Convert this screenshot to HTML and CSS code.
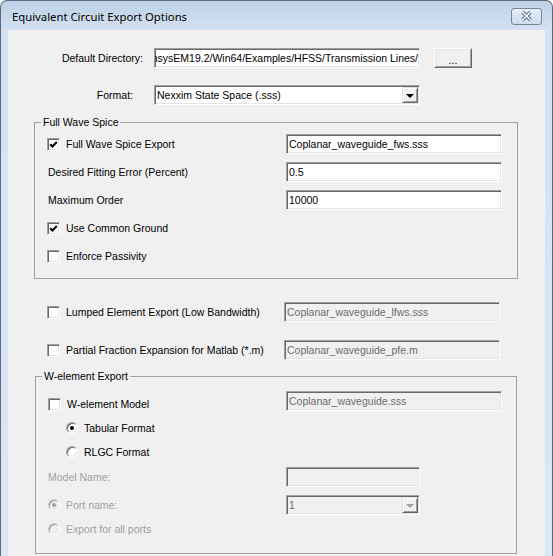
FILE: index.html
```html
<!DOCTYPE html>
<html lang="en">
<head>
    <meta charset="UTF-8">
    <title>Equivalent Circuit Export Options</title>
    <link rel="stylesheet" href="styles.css">
</head>
<body>
    <div class="window">
        <div class="titlebar">
            <span class="title">Equivalent Circuit Export Options</span>
            <span class="close-btn">
                <svg width="29" height="15" viewBox="0 0 29 15">
                    <path d="M10.5 3 L18.5 11 M18.5 3 L10.5 11" stroke="#56677b" stroke-width="3.6" fill="none"/>
                    <path d="M10.5 3 L18.5 11 M18.5 3 L10.5 11" stroke="#fbfdff" stroke-width="1.6" fill="none"/>
                </svg>
            </span>
        </div>

        <div class="client">
            <div class="top-grid">
                <span class="label dir-label">Default Directory:</span>
                <div class="field dir-field"><span>nsysEM19.2/Win64/Examples/HFSS/Transmission Lines/</span></div>
                <span class="button">...</span>

                <span class="label format-label">Format:</span>
                <div class="field combo">
                    <span>Nexxim State Space (.sss)</span>
                    <span class="combo-btn"><i class="arrow"></i></span>
                </div>
            </div>

            <!-- Full wave spice options -->
            <fieldset class="group fws">
                <legend>Full Wave Spice</legend>
                <div class="row">
                    <span class="check on"><svg width="9" height="9" viewBox="0 0 9 9"><polyline points="1.2,4.2 3.4,6.4 7.8,2" stroke="#000" stroke-width="2.1" fill="none"/></svg></span>
                    <span>Full Wave Spice Export</span>
                    <div class="field">Coplanar_waveguide_fws.sss</div>
                </div>
                <div class="row text-row">
                    <span>Desired Fitting Error (Percent)</span>
                    <div class="field">0.5</div>
                </div>
                <div class="row text-row">
                    <span>Maximum Order</span>
                    <div class="field">10000</div>
                </div>
                <div class="row">
                    <span class="check on"><svg width="9" height="9" viewBox="0 0 9 9"><polyline points="1.2,4.2 3.4,6.4 7.8,2" stroke="#000" stroke-width="2.1" fill="none"/></svg></span>
                    <span>Use Common Ground</span>
                </div>
                <div class="row">
                    <span class="check"></span>
                    <span>Enforce Passivity</span>
                </div>
            </fieldset>

            <div class="row solo-row">
                <span class="check"></span>
                <span>Lumped Element Export (Low Bandwidth)</span>
                <div class="field disabled">Coplanar_waveguide_lfws.sss</div>
            </div>
            <div class="row solo-row">
                <span class="check"></span>
                <span>Partial Fraction Expansion for Matlab (*.m)</span>
                <div class="field disabled">Coplanar_waveguide_pfe.m</div>
            </div>

            <!-- W-element options -->
            <fieldset class="group wel">
                <legend>W-element Export</legend>
                <div class="row model-check">
                    <span class="check"></span>
                    <span>W-element Model</span>
                    <div class="field disabled">Coplanar_waveguide.sss</div>
                </div>
                <div class="row indent tabular">
                    <span class="radio on"></span>
                    <span>Tabular Format</span>
                </div>
                <div class="row indent rlgc">
                    <span class="radio"></span>
                    <span>RLGC Format</span>
                </div>
                <div class="row model-row muted">
                    <span>Model Name:</span>
                    <div class="field disabled short"></div>
                </div>
                <div class="row port-row muted">
                    <span class="radio on disabled"></span>
                    <span>Port name:</span>
                    <div class="field combo disabled short">
                        <span>1</span>
                        <span class="combo-btn"><i class="arrow"></i></span>
                    </div>
                </div>
                <div class="row all-row muted">
                    <span class="radio disabled"></span>
                    <span>Export for all ports</span>
                </div>
            </fieldset>
        </div>
    </div>
</body>
</html>
```

FILE: styles.css
```css
* {
    margin: 0;
    padding: 0;
    box-sizing: border-box;
}

body {
    width: 553px;
    height: 556px;
    overflow: hidden;
    background: #fff;
    font-family: 'Liberation Sans', Arial, sans-serif;
    font-size: 10.5px;
    color: #000;
}

.window {
    height: 600px;
    display: flex;
    flex-direction: column;
    border: 1px solid #5b697a;
    border-bottom: none;
    border-radius: 7px 7px 0 0;
    background: linear-gradient(#bed1e7, #d3e1f1 29px, #dbe7f4);
}

.titlebar {
    height: 29px;
    flex: none;
    display: flex;
    align-items: center;
    justify-content: space-between;
    padding: 0 10px 0 11px;
}

.title {
    font-family: 'Noto Sans', 'Open Sans', sans-serif;
    font-size: 11.3px;
    margin-top: 2px;
}

.close-btn {
    width: 31px;
    height: 17px;
    margin-top: 2px;
    display: flex;
    align-items: center;
    justify-content: center;
    border: 1px solid #77869a;
    border-radius: 3px;
    background: linear-gradient(#e6eef8, #cddcee);
}

.client {
    flex: 1;
    margin: 0 7px;
    padding-top: 18px;
    background: #f0f0f0;
}

/* directory + format */
.top-grid {
    display: grid;
    grid-template-columns: 146px 266px 52px;
    grid-auto-rows: 20px;
    row-gap: 17px;
    align-items: center;
}

.dir-label {
    justify-self: end;
    padding-right: 11px;
}

.format-label {
    justify-self: end;
    padding-right: 21px;
}

/* sunken edit box */
.field {
    height: 20px;
    display: flex;
    align-items: center;
    padding: 0 2px;
    white-space: nowrap;
    overflow: hidden;
    background: #fff;
    border: 1px solid;
    border-color: #a0a0a0 #fff #fff #a0a0a0;
    box-shadow: inset 1px 1px #696969, inset -1px -1px #e3e3e3;
}

.field.disabled {
    background: #f0f0f0;
    color: #6d6d6d;
}

.dir-field {
    justify-content: flex-end;
    padding-right: 1px;
}

.dir-field span {
    flex: none;
}

.combo {
    padding-right: 1px;
}

.combo-btn {
    width: 16px;
    height: 16px;
    margin-left: auto;
    display: flex;
    align-items: center;
    justify-content: center;
    background: #f0f0f0;
    border: 1px solid;
    border-color: #e3e3e3 #696969 #696969 #e3e3e3;
    box-shadow: inset 1px 1px #fff, inset -1px -1px #a0a0a0;
}

.arrow {
    width: 0;
    height: 0;
    margin-top: 1px;
    border-left: 4px solid transparent;
    border-right: 4px solid transparent;
    border-top: 4px solid #000;
}

.disabled .arrow {
    border-top-color: #a0a0a0;
}

/* raised push button */
.button {
    height: 20px;
    margin-left: 14px;
    display: flex;
    align-items: center;
    justify-content: center;
    padding-top: 3px;
    background: #f0f0f0;
    border: 1px solid;
    border-color: #fff #696969 #696969 #fff;
    box-shadow: inset 1px 1px #e3e3e3, inset -1px -1px #a0a0a0;
}

/* group boxes */
.group {
    border: 1px solid #a0a0a0;
    min-width: 0;
}

.group legend {
    margin-left: 6px;
    padding: 0 2px;
    line-height: 14px;
}

.fws {
    width: 484px;
    margin: 10px 0 0 26px;
    padding: 5px 15px 12px 0;
}

.wel {
    width: 482px;
    margin: 9px 0 0 27px;
    padding: 11px 14px 14px 0;
}

.row {
    height: 20px;
    display: flex;
    align-items: center;
    white-space: nowrap;
}

.row .field {
    width: 216px;
    margin-left: auto;
}

.fws .row {
    padding-left: 12px;
}

.fws .row + .row {
    margin-top: 8px;
}

.fws .text-row {
    padding-left: 13px;
}

.solo-row {
    margin-top: 23px;
    padding: 0 45px 0 39px;
}

.solo-row + .solo-row {
    margin-top: 18px;
}

.wel .row {
    padding-left: 12px;
}

.wel .indent {
    padding-left: 30px;
}

/* the model file box sits a little above its checkbox */
.model-check .field {
    align-self: flex-start;
    margin-top: -3px;
}

.tabular { margin-top: 4px; }
.rlgc { margin-top: 4px; }
.model-row { margin-top: 5px; }
.port-row { margin-top: 8px; }
.all-row { margin-top: 4px; }

.row .field.short {
    width: 134px;
    margin-right: 82px;
}

.muted {
    color: #a0a0a0;
}

/* checkbox */
.check {
    width: 13px;
    height: 13px;
    flex: none;
    margin-right: 6px;
    display: flex;
    align-items: center;
    justify-content: center;
    background: #fff;
    border: 1px solid;
    border-color: #a0a0a0 #fff #fff #a0a0a0;
    box-shadow: inset 1px 1px #696969, inset -1px -1px #e3e3e3;
}

/* radio button */
.radio {
    width: 12px;
    height: 12px;
    flex: none;
    margin-right: 6px;
    display: flex;
    align-items: center;
    justify-content: center;
    border-radius: 50%;
    background: #fff;
    border: 1px solid;
    border-color: #a0a0a0 #fff #fff #a0a0a0;
    box-shadow: inset 1px 1px #696969, inset -1px -1px #e3e3e3;
}

.radio.on::after {
    content: '';
    width: 4px;
    height: 4px;
    border-radius: 50%;
    background: #000;
}

.radio.disabled {
    background: #f0f0f0;
    border-color: #c8c8c8 #fff #fff #c8c8c8;
    box-shadow: inset 1px 1px #a0a0a0, inset -1px -1px #e3e3e3;
}

.radio.disabled::after {
    background: #a0a0a0;
}
```
